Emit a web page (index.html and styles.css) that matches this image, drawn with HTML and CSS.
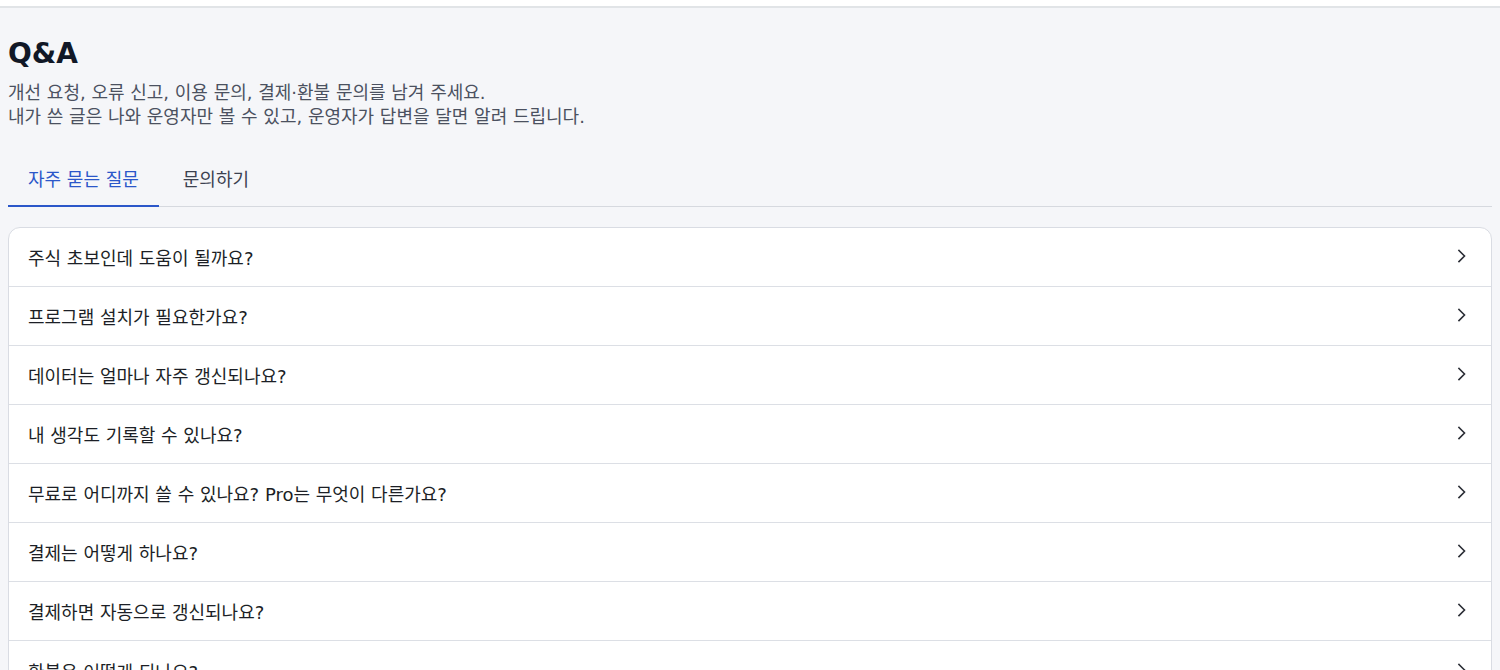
FILE: index.html
```html
<!DOCTYPE html>
<html lang="ko">
<head>
<meta charset="utf-8">
<title>Q&amp;A</title>
<link rel="stylesheet" href="styles.css">
</head>
<body>
<div class="topbar"></div>
<main class="page">
  <header class="intro">
    <h1 class="title">Q&amp;A</h1>
    <p class="desc">개선 요청, 오류 신고, 이용 문의, 결제·환불 문의를 남겨 주세요.<br>내가 쓴 글은 나와 운영자만 볼 수 있고, 운영자가 답변을 달면 알려 드립니다.</p>
  </header>
  <nav class="tabs">
    <button class="tab active">자주 묻는 질문</button>
    <button class="tab">문의하기</button>
  </nav>
  <ul class="faq">
    <li class="faq-item"><span>주식 초보인데 도움이 될까요?</span><svg class="chev" viewBox="0 0 16 16"><path d="M6 2.5 L11.5 8 L6 13.5"/></svg></li>
    <li class="faq-item"><span>프로그램 설치가 필요한가요?</span><svg class="chev" viewBox="0 0 16 16"><path d="M6 2.5 L11.5 8 L6 13.5"/></svg></li>
    <li class="faq-item"><span>데이터는 얼마나 자주 갱신되나요?</span><svg class="chev" viewBox="0 0 16 16"><path d="M6 2.5 L11.5 8 L6 13.5"/></svg></li>
    <li class="faq-item"><span>내 생각도 기록할 수 있나요?</span><svg class="chev" viewBox="0 0 16 16"><path d="M6 2.5 L11.5 8 L6 13.5"/></svg></li>
    <li class="faq-item"><span>무료로 어디까지 쓸 수 있나요? Pro는 무엇이 다른가요?</span><svg class="chev" viewBox="0 0 16 16"><path d="M6 2.5 L11.5 8 L6 13.5"/></svg></li>
    <li class="faq-item"><span>결제는 어떻게 하나요?</span><svg class="chev" viewBox="0 0 16 16"><path d="M6 2.5 L11.5 8 L6 13.5"/></svg></li>
    <li class="faq-item"><span>결제하면 자동으로 갱신되나요?</span><svg class="chev" viewBox="0 0 16 16"><path d="M6 2.5 L11.5 8 L6 13.5"/></svg></li>
    <li class="faq-item"><span>환불은 어떻게 되나요?</span><svg class="chev" viewBox="0 0 16 16"><path d="M6 2.5 L11.5 8 L6 13.5"/></svg></li>
  </ul>
</main>
</body>
</html>
```
FILE: styles.css
```css
* { box-sizing: border-box; }
html, body {
  margin: 0;
  padding: 0;
  background: #f5f6f9;
  font-family: "DejaVu Sans", "Noto Sans CJK KR", sans-serif;
  color: #1c1f26;
}
.topbar {
  height: 8px;
  background: #ffffff;
  border-bottom: 2px solid #e1e4e7;
}
.page {
  padding: 0 8px;
}
.intro {
  padding-top: 28px;
}
.title {
  margin: 0;
  font-size: 28px;
  line-height: 36px;
  font-weight: 700;
  color: #111827;
}
.desc {
  margin: 9px 0 0;
  font-size: 18px;
  line-height: 24px;
  color: #4b5160;
}
.tabs {
  display: flex;
  gap: 4px;
  margin-top: 26px;
  border-bottom: 1px solid #d6d9df;
}
.tab {
  appearance: none;
  background: none;
  border: 0;
  border-bottom: 2px solid transparent;
  margin-bottom: -1px;
  padding: 13px 20px 13px;
  font-family: inherit;
  font-size: 18px;
  line-height: 24px;
  color: #3c4150;
  cursor: pointer;
}
.tab.active {
  color: #2b57c9;
  border-bottom-color: #2b57c9;
}
.faq {
  list-style: none;
  margin: 20px 0 0;
  padding: 0;
  background: #ffffff;
  border: 1px solid #d9dce3;
  border-radius: 12px;
}
.faq-item {
  display: flex;
  align-items: center;
  justify-content: space-between;
  height: 59px;
  padding: 0 22px 0 19px;
  font-size: 18px;
  color: #1c1f26;
  border-bottom: 1px solid #dcdfe5;
}
.faq-item:last-child { border-bottom: 0; }
.chev {
  width: 16px;
  height: 16px;
  margin-top: -2px;
  fill: none;
  stroke: #2a2d35;
  stroke-width: 1.6;
  stroke-linecap: square;
}
```
